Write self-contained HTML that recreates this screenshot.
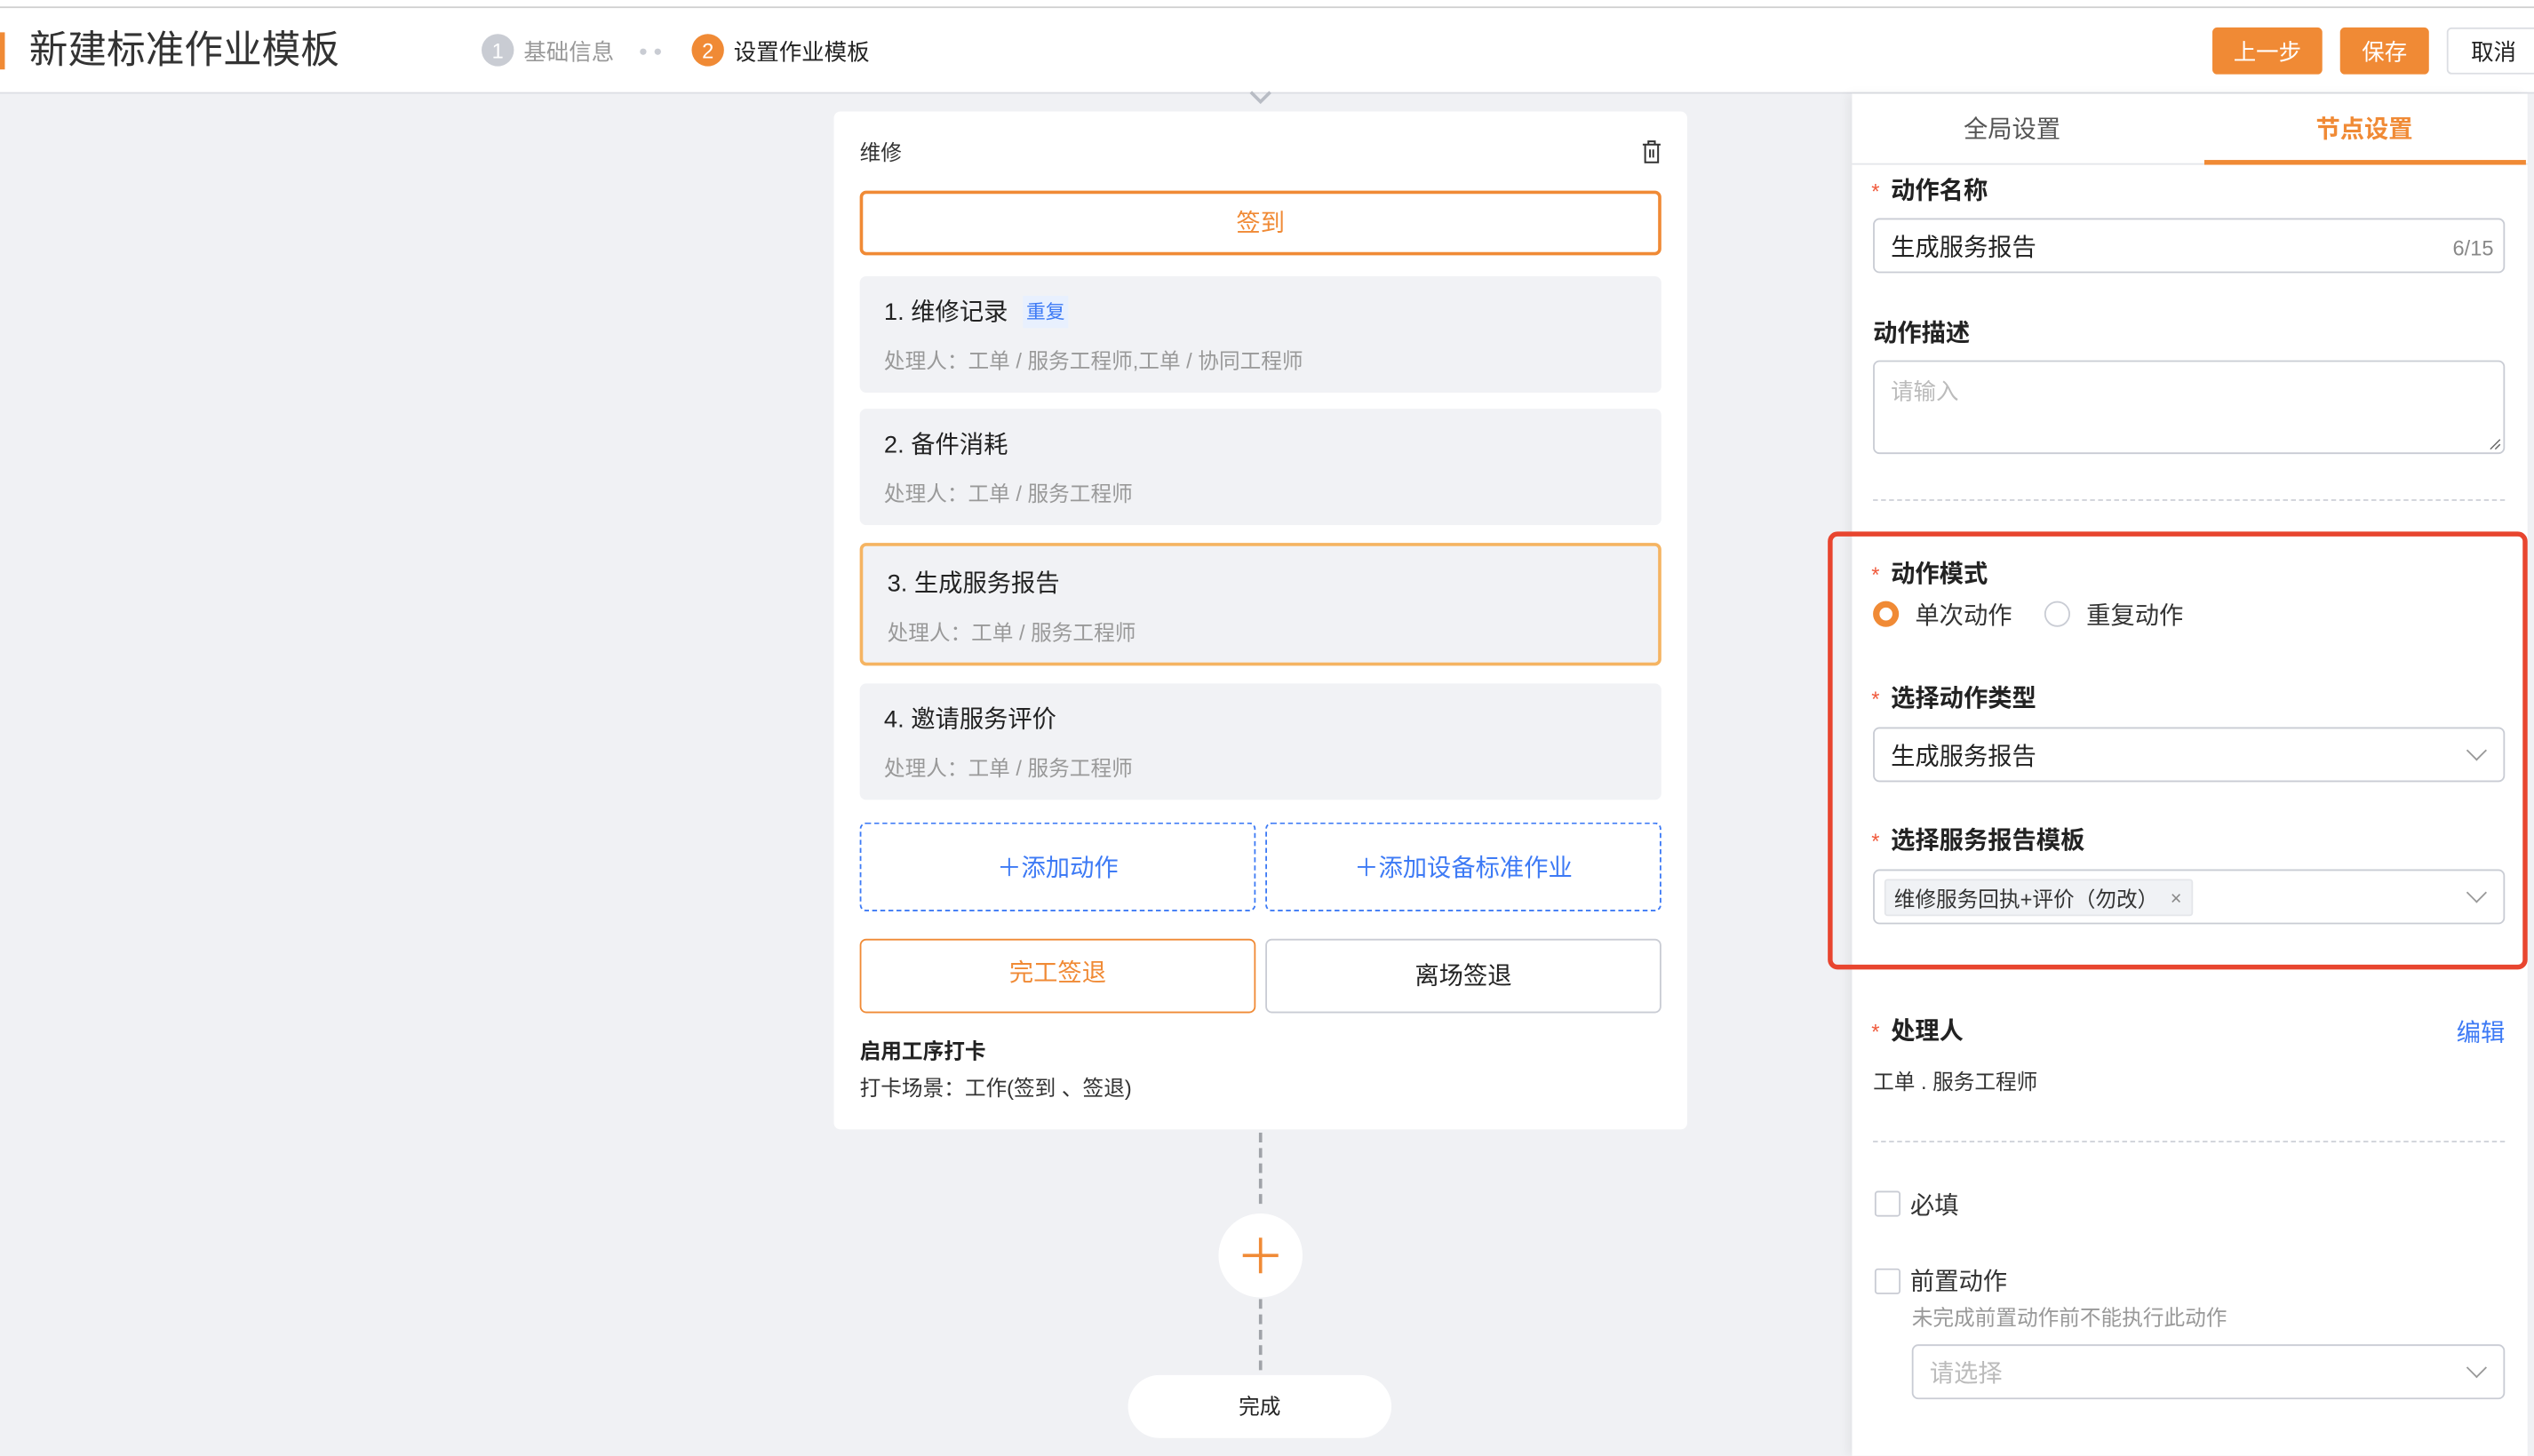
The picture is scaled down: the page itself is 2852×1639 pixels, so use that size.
<!DOCTYPE html>
<html><head><meta charset="utf-8">
<style>
html,body{margin:0;padding:0;width:2852px;height:1638px;overflow:hidden;background:#f0f1f4;}
#w{position:absolute;left:0;top:0;width:1568px;height:901px;transform:scale(1.81888);transform-origin:0 0;background:#f0f1f4;font-family:"Liberation Sans","Noto Sans CJK SC",sans-serif;color:#333;}
.a{position:absolute;}
.t{position:absolute;white-space:nowrap;line-height:1;margin-top:1px;}
.lbl{font-size:15px;font-weight:bold;color:#222;}
.star{color:#f05a3c;font-size:13px;}
.inp{position:absolute;border:1px solid #c9ccd4;border-radius:4px;background:#fff;box-sizing:border-box;}
.item{position:absolute;left:532px;width:496px;background:#f1f2f5;border-radius:4px;box-sizing:border-box;}
.it1{position:absolute;left:15px;font-size:15px;color:#222;line-height:1;white-space:nowrap;margin-top:1px;}
.it2{position:absolute;left:15px;font-size:13px;color:#999;line-height:1;white-space:nowrap;margin-top:1px;}
.chev{position:absolute;width:8px;height:8px;border-right:1.3px solid #999;border-bottom:1.3px solid #999;transform:rotate(45deg);}
</style></head><body><div id="w">
<!-- header -->
<div class="a" style="left:0;top:0;width:1568px;height:57px;background:#fff;border-bottom:1px solid #dcdee3;"></div>
<div class="a" style="left:0;top:4px;width:1568px;height:1px;background:#d0d0d0;"></div>
<div class="a" style="left:0;top:20px;width:3px;height:23px;background:#f08a35;"></div>
<div class="t" style="left:18px;top:19px;font-size:24px;color:#333;">新建标准作业模板</div>
<div class="a" style="left:298px;top:21px;width:20px;height:20px;border-radius:50%;background:#c9ccd3;color:#fff;font-size:13px;text-align:center;line-height:21px;">1</div>
<div class="t" style="left:324px;top:24px;font-size:14px;color:#999;">基础信息</div>
<div class="a" style="left:396px;top:30px;width:4px;height:4px;border-radius:50%;background:#c9ccd3;"></div>
<div class="a" style="left:405px;top:30px;width:4px;height:4px;border-radius:50%;background:#c9ccd3;"></div>
<div class="a" style="left:428px;top:21px;width:20px;height:20px;border-radius:50%;background:#f08a35;color:#fff;font-size:13px;text-align:center;line-height:21px;">2</div>
<div class="t" style="left:454px;top:24px;font-size:14px;color:#222;">设置作业模板</div>
<div class="a" style="left:1369px;top:17px;width:68px;height:29px;background:#f08a35;border-radius:3px;color:#fff;font-size:14px;text-align:center;line-height:30px;">上一步</div>
<div class="a" style="left:1448px;top:17px;width:55px;height:29px;background:#f08a35;border-radius:3px;color:#fff;font-size:14px;text-align:center;line-height:30px;">保存</div>
<div class="a" style="left:1514px;top:17px;width:60px;height:29px;background:#fff;border:1px solid #dcdee3;border-radius:3px;box-sizing:border-box;color:#222;font-size:14px;line-height:28px;padding-left:14px;">取消</div>

<!-- canvas -->
<svg class="a" style="left:772px;top:56px" width="16" height="10"><path d="M2 1 L8 7 L14 1" fill="none" stroke="#b8bcc4" stroke-width="2"/></svg>
<div class="a" style="left:516px;top:69px;width:528px;height:630px;background:#fff;border-radius:4px;"></div>
<div class="t" style="left:532px;top:87px;font-size:13px;color:#333;">维修</div>
<svg class="a" style="left:1015px;top:86px" width="14" height="16"><path d="M1.5 3.5 H12.5 M5 3.5 V1.5 H9 V3.5 M3 3.5 V14.5 H11 V3.5 M6 6.5 V11.5 M8 6.5 V11.5" fill="none" stroke="#333" stroke-width="1.1"/></svg>
<div class="a" style="left:532px;top:118px;width:496px;height:40px;border:2px solid #f08a35;border-radius:4px;box-sizing:border-box;color:#f08a35;font-size:15px;text-align:center;line-height:38px;">签到</div>

<div class="item" style="top:171px;height:72px;"><div class="it1" style="top:14px;">1. 维修记录</div><div class="a" style="left:101px;top:12px;width:28px;height:20px;background:#e8f0fe;color:#3d7af5;font-size:12px;text-align:center;line-height:21px;">重复</div><div class="it2" style="top:45px;">处理人：工单 / 服务工程师,工单 / 协同工程师</div></div>
<div class="item" style="top:253px;height:72px;"><div class="it1" style="top:14px;">2. 备件消耗</div><div class="it2" style="top:45px;">处理人：工单 / 服务工程师</div></div>
<div class="item" style="top:336px;height:76px;border:2px solid #f5b462;"><div class="it1" style="top:15px;">3. 生成服务报告</div><div class="it2" style="top:46px;">处理人：工单 / 服务工程师</div></div>
<div class="item" style="top:423px;height:72px;"><div class="it1" style="top:14px;">4. 邀请服务评价</div><div class="it2" style="top:45px;">处理人：工单 / 服务工程师</div></div>

<div class="a" style="left:532px;top:509px;width:245px;height:55px;border:1.5px dashed #3d7af5;border-radius:4px;box-sizing:border-box;color:#3d7af5;font-size:15px;text-align:center;line-height:55px;">＋添加动作</div>
<div class="a" style="left:783px;top:509px;width:245px;height:55px;border:1.5px dashed #3d7af5;border-radius:4px;box-sizing:border-box;color:#3d7af5;font-size:15px;text-align:center;line-height:55px;">＋添加设备标准作业</div>
<div class="a" style="left:532px;top:581px;width:245px;height:46px;border:1.5px solid #f08a35;border-radius:4px;box-sizing:border-box;color:#f08a35;font-size:15px;text-align:center;line-height:42px;">完工签退</div>
<div class="a" style="left:783px;top:581px;width:245px;height:46px;border:1.5px solid #c9ccd4;border-radius:4px;box-sizing:border-box;color:#222;font-size:15px;text-align:center;line-height:46px;">离场签退</div>
<div class="t" style="left:532px;top:643px;font-size:13px;font-weight:bold;color:#222;">启用工序打卡</div>
<div class="t" style="left:532px;top:666px;font-size:13px;color:#333;">打卡场景：工作(签到 、签退)</div>

<div class="a" style="left:779px;top:701px;width:0;height:44px;border-left:2px dashed #a0a3a8;"></div>
<div class="a" style="left:754px;top:751px;width:52px;height:52px;border-radius:50%;background:#fff;"></div>
<div class="a" style="left:769px;top:776px;width:22px;height:2px;background:#f08a35;"></div>
<div class="a" style="left:779px;top:766px;width:2px;height:22px;background:#f08a35;"></div>
<div class="a" style="left:779px;top:804px;width:0;height:44px;border-left:2px dashed #a0a3a8;"></div>
<div class="a" style="left:698px;top:851px;width:163px;height:39px;border-radius:20px;background:#fff;color:#222;font-size:13px;text-align:center;line-height:40px;">完成</div>

<!-- right panel -->
<div class="a" style="left:1146px;top:58px;width:418px;height:843px;background:#fff;box-shadow:-3px 0 6px rgba(0,0,0,0.05);"></div>
<div class="a" style="left:1146px;top:101px;width:418px;height:1px;background:#e4e6ea;"></div>
<div class="t" style="left:1215px;top:72px;font-size:15px;color:#555;">全局设置</div>
<div class="t" style="left:1433px;top:72px;font-size:15px;color:#f08a35;font-weight:bold;">节点设置</div>
<div class="a" style="left:1364px;top:99px;width:199px;height:3px;background:#f08a35;"></div>

<div class="t star" style="left:1158px;top:111px;">*</div>
<div class="t lbl" style="left:1170px;top:110px;">动作名称</div>
<div class="inp" style="left:1159px;top:135px;width:391px;height:34px;"><div class="t" style="left:10px;top:9px;font-size:15px;color:#222;">生成服务报告</div><div class="t" style="right:6px;top:10px;font-size:13px;color:#888;">6/15</div></div>
<div class="t lbl" style="left:1159px;top:198px;">动作描述</div>
<div class="inp" style="left:1159px;top:223px;width:391px;height:58px;"><div class="t" style="left:10px;top:10px;font-size:14px;color:#bbb;">请输入</div><svg class="a" style="right:1px;bottom:1px" width="8" height="8"><path d="M7 1 L1 7 M7 4 L4 7" stroke="#666" stroke-width="0.8"/></svg></div>
<div class="a" style="left:1159px;top:309px;width:391px;height:0;border-top:1px dashed #d0d3d9;"></div>

<div class="a" style="left:1131px;top:329px;width:433px;height:271px;border:3px solid #e8452f;border-radius:6px;box-sizing:border-box;"></div>
<div class="t star" style="left:1158px;top:348px;">*</div>
<div class="t lbl" style="left:1170px;top:347px;">动作模式</div>
<div class="a" style="left:1159px;top:372px;width:16px;height:16px;border-radius:50%;border:4.5px solid #f08a35;box-sizing:border-box;"></div>
<div class="t" style="left:1185px;top:373px;font-size:15px;color:#333;">单次动作</div>
<div class="a" style="left:1265px;top:372px;width:16px;height:16px;border-radius:50%;border:1px solid #c9ccd4;box-sizing:border-box;"></div>
<div class="t" style="left:1291px;top:373px;font-size:15px;color:#333;">重复动作</div>

<div class="t star" style="left:1158px;top:425px;">*</div>
<div class="t lbl" style="left:1170px;top:424px;">选择动作类型</div>
<div class="inp" style="left:1159px;top:450px;width:391px;height:34px;"><div class="t" style="left:10px;top:9px;font-size:15px;color:#222;">生成服务报告</div><div class="chev" style="right:12px;top:9px;"></div></div>

<div class="t star" style="left:1158px;top:513px;">*</div>
<div class="t lbl" style="left:1170px;top:512px;">选择服务报告模板</div>
<div class="inp" style="left:1159px;top:538px;width:391px;height:34px;"><div class="a" style="left:6px;top:5px;width:191px;height:23px;background:#f0f2f5;border:1px solid #e4e6ea;border-radius:2px;box-sizing:border-box;"><div class="t" style="left:5px;top:4px;font-size:13px;color:#333;">维修服务回执+评价（勿改）</div><div class="t" style="left:176px;top:4px;font-size:12px;color:#888;">×</div></div><div class="chev" style="right:12px;top:9px;"></div></div>

<div class="t star" style="left:1158px;top:631px;">*</div>
<div class="t lbl" style="left:1170px;top:630px;">处理人</div>
<div class="t" style="left:1520px;top:631px;font-size:15px;color:#3d7af5;">编辑</div>
<div class="t" style="left:1159px;top:662px;font-size:13px;color:#333;">工单 . 服务工程师</div>
<div class="a" style="left:1159px;top:706px;width:391px;height:0;border-top:1px dashed #d0d3d9;"></div>

<div class="a" style="left:1160px;top:737px;width:16px;height:16px;border:1px solid #c9ccd4;border-radius:2px;box-sizing:border-box;"></div>
<div class="t" style="left:1182px;top:738px;font-size:15px;color:#333;">必填</div>
<div class="a" style="left:1160px;top:785px;width:16px;height:16px;border:1px solid #c9ccd4;border-radius:2px;box-sizing:border-box;"></div>
<div class="t" style="left:1182px;top:785px;font-size:15px;color:#333;">前置动作</div>
<div class="t" style="left:1183px;top:808px;font-size:13px;color:#999;">未完成前置动作前不能执行此动作</div>
<div class="inp" style="left:1183px;top:832px;width:367px;height:34px;"><div class="t" style="left:10px;top:9px;font-size:15px;color:#bbb;">请选择</div><div class="chev" style="right:12px;top:9px;"></div></div>
</div></body></html>
